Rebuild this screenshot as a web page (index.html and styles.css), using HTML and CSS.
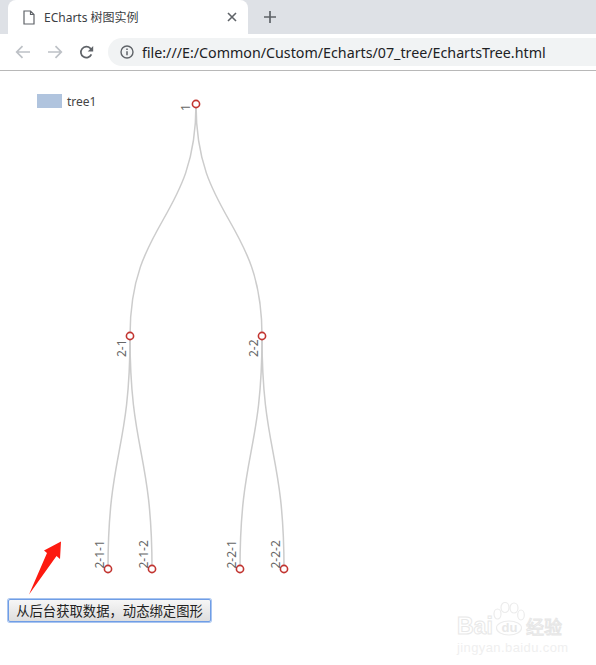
FILE: index.html
```html
<!DOCTYPE html>
<html lang="zh">
<head>
<meta charset="utf-8">
<title>ECharts 树图实例</title>
<link rel="stylesheet" href="styles.css">
</head>
<body>
<header class="browser">
  <div class="tabstrip">
    <div class="tab">
      <svg class="doc-icon" width="12" height="15" viewBox="0 0 12 15"><path d="M1 1h6.500L11 4.500V14H1zM7.500 1v3.500H11" fill="none" stroke="#5f6368" stroke-width="1.200"/></svg>
      <span class="tab-title">ECharts 树图实例</span>
      <svg class="tab-close" width="10" height="10" viewBox="0 0 10 10"><path d="M1 1l8 8M9 1l-8 8" stroke="#5f6368" stroke-width="1.600"/></svg>
    </div>
    <svg class="new-tab" width="12" height="12" viewBox="0 0 12 12"><path d="M6 0v12M0 6h12" stroke="#5f6368" stroke-width="1.700"/></svg>
  </div>
  <div class="toolbar">
    <svg class="nav" width="16" height="14" viewBox="0 0 16 14"><path d="M15 7H2M7.500 1.200L1.700 7l5.800 5.800" fill="none" stroke="#bdc1c6" stroke-width="1.700"/></svg>
    <svg class="nav" width="16" height="14" viewBox="0 0 16 14"><path d="M1 7h13M8.500 1.200L14.300 7l-5.800 5.800" fill="none" stroke="#bdc1c6" stroke-width="1.700"/></svg>
    <svg class="nav" width="15" height="15" viewBox="0 0 15 15"><path d="M12.400 9.400A5.500 5.500 0 1 1 11.400 3.400L13 5" fill="none" stroke="#5f6368" stroke-width="1.700"/><path d="M14.200 1v5.500H8.700z" fill="#5f6368"/></svg>
    <div class="omnibox">
      <svg width="14" height="14" viewBox="0 0 14 14"><circle cx="7" cy="7" r="6" fill="none" stroke="#5f6368" stroke-width="1.400"/><path d="M7 6.200v4M7 3.600v1.400" stroke="#5f6368" stroke-width="1.500"/></svg>
      <span class="url">file:///E:/Common/Custom/Echarts/07_tree/EchartsTree.html</span>
    </div>
  </div>
</header>
<main class="page">
  <svg class="chart" width="596" height="528" viewBox="0 71 596 528">
    <rect x="37" y="94" width="25" height="14" fill="#b0c4de"/>
    <text class="legend" x="67" y="106">tree1</text>
    <g class="links">
      <path d="M196 104C196 220 130 220 130 336"/>
      <path d="M196 104C196 220 262 220 262 336"/>
      <path d="M130 336C130 452 108 452 108 569"/>
      <path d="M130 336C130 452 152 452 152 569"/>
      <path d="M262 336C262 452 240 452 240 569"/>
      <path d="M262 336C262 452 284 452 284 569"/>
    </g>
    <g class="nodes">
      <circle cx="196" cy="104" r="3.600"/>
      <circle cx="130" cy="336" r="3.600"/>
      <circle cx="262" cy="336" r="3.600"/>
      <circle cx="108" cy="569" r="3.600"/>
      <circle cx="152" cy="569" r="3.600"/>
      <circle cx="240" cy="569" r="3.600"/>
      <circle cx="284" cy="569" r="3.600"/>
    </g>
    <g class="labels">
      <text transform="translate(190 111) rotate(-90)">1</text>
      <text transform="translate(126 357) rotate(-90)">2-1</text>
      <text transform="translate(258 357) rotate(-90)">2-2</text>
      <text transform="translate(104 568.500) rotate(-90)">2-1-1</text>
      <text transform="translate(148 568.500) rotate(-90)">2-1-2</text>
      <text transform="translate(236 568.500) rotate(-90)">2-2-1</text>
      <text transform="translate(280 568.500) rotate(-90)">2-2-2</text>
    </g>
    <path d="M29 594.500L47 553 44 550.500 61 541.500 60 559 56.500 556z" fill="#fd1a10"/>
  </svg>
  <button class="load-btn" type="button">从后台获取数据，动态绑定图形</button>
</main>
<aside class="watermark">
  <svg class="paw" width="32" height="34" viewBox="0 0 32 34">
    <g fill="#fff" stroke="#ececec" stroke-width="1.200">
      <ellipse cx="4.500" cy="12" rx="3.500" ry="5"/>
      <ellipse cx="12" cy="5.500" rx="4" ry="5"/>
      <ellipse cx="21" cy="6" rx="4" ry="5"/>
      <ellipse cx="28" cy="13" rx="3.300" ry="5"/>
      <ellipse cx="16" cy="26" rx="12.500" ry="7"/>
    </g>
  </svg>
  <div class="wm-row"><span class="wm-bai">Bai</span><span class="wm-du">du</span><span class="wm-cn">经验</span></div>
  <div class="wm-url">jingyan.baidu.com</div>
</aside>
</body>
</html>
```
FILE: styles.css
```css
* { box-sizing: border-box; }
html, body { margin: 0; padding: 0; }
body {
  position: relative;
  width: 596px;
  height: 665px;
  overflow: hidden;
  background: #fff;
  font-family: "Open Sans", "Noto Sans CJK SC", sans-serif;
}
.browser { display: flex; flex-direction: column; height: 71px; border-bottom: 1px solid #b8b8b8; }
.tabstrip { display: flex; align-items: center; height: 34px; background: #dee1e6; padding-left: 8px; }
.tab {
  display: flex;
  align-items: center;
  width: 240px;
  height: 34px;
  background: #fff;
  border-radius: 8px 8px 0 0;
  padding: 0 11px 0 15px;
}
.doc-icon { flex: none; }
.tab-title { flex: 1; margin-left: 9px; font-size: 12px; color: #3c4043; white-space: nowrap; font-family: "Noto Sans", "Noto Sans CJK SC", sans-serif; }
.tab-close { flex: none; }
.new-tab { margin-left: 16px; }
.toolbar { display: flex; align-items: center; height: 36px; padding: 0 0 0 15px; gap: 16px; background: #fff; }
.nav { flex: none; }
.omnibox {
  flex: 1;
  display: flex;
  align-items: center;
  gap: 8px;
  height: 28px;
  margin-left: -2px;
  padding-left: 12px;
  background: #f1f3f4;
  border-radius: 14px 0 0 14px;
}
.url { font-size: 14.250px; color: #202124; white-space: nowrap; font-family: "Noto Sans", sans-serif; }
.page { display: flex; flex-direction: column; align-items: flex-start; }
.chart { display: block; flex: none; }
.legend { font: 12px "Noto Sans", sans-serif; fill: #444; }
.links path { fill: none; stroke: #ccc; stroke-width: 1.500; }
.nodes circle { fill: #fff; stroke: #c23531; stroke-width: 1.600; }
.labels text { font: 12px "Noto Sans", sans-serif; fill: #666; }
.load-btn {
  width: 203px;
  height: 23px;
  margin-left: 8px;
  padding: 0;
  font: 13.330px "Noto Sans CJK SC", sans-serif;
  color: #222;
  background: linear-gradient(#f6f6f6, #dedede);
  border: 1px solid #6f9de6;
  border-radius: 2px;
  box-shadow: 0 0 0 1px #a9c5f0;
}
.watermark {
  position: absolute;
  left: 457px;
  top: 602px;
  width: 108px;
  height: 50px;
}
.paw { position: absolute; left: 36px; top: 0; }
.wm-row { position: relative; display: flex; align-items: center; height: 18px; margin-top: 15px; }
.wm-bai { width: 36px; font: bold 23px "Liberation Sans", sans-serif; color: #fff; -webkit-text-stroke: 1px #e8e8e8; }
.wm-du { width: 33px; text-align: center; padding-top: 3px; font: bold 13px "Liberation Sans", sans-serif; color: #e8e8e8; }
.wm-cn { font: 18px "Noto Sans CJK SC", sans-serif; color: #fff; -webkit-text-stroke: 1px #e6e6e6; white-space: nowrap; }
.wm-url { position: relative; margin-top: 5px; font: 13px "Liberation Sans", sans-serif; color: #efefef; white-space: nowrap; letter-spacing: .4px; }
```
